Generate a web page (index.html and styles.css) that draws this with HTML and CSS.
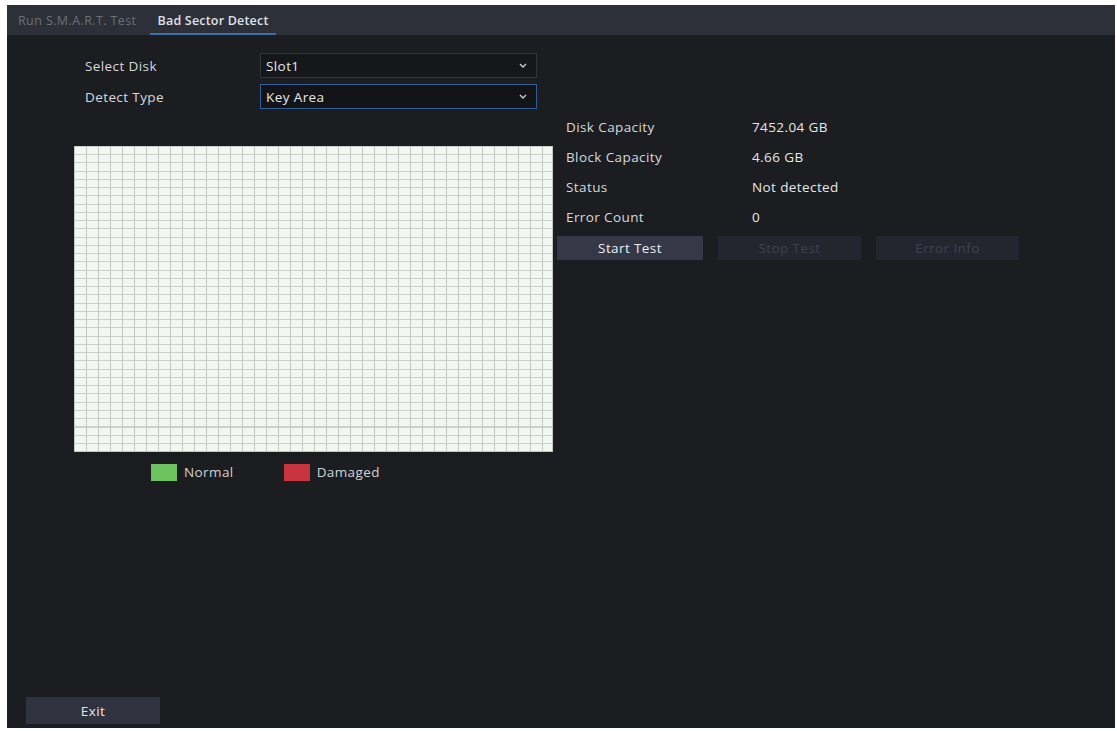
FILE: index.html
```html
<!DOCTYPE html>
<html>
<head>
<meta charset="utf-8">
<link rel="stylesheet" href="styles.css">
</head>
<body>
<div class="window">
  <div class="tabs">
    <div class="tab">Run S.M.A.R.T. Test</div>
    <div class="tab active">Bad Sector Detect</div>
  </div>
  <div class="content">
    <div class="form">
      <div class="form-row">
        <span class="label">Select Disk</span>
        <div class="select">
          <span>Slot1</span>
          <svg class="chev" width="8" height="5" viewBox="0 0 8 5"><path d="M1 1 L4 4 L7 1" fill="none" stroke="#c8ccd2" stroke-width="1.4"/></svg>
        </div>
      </div>
      <div class="form-row">
        <span class="label">Detect Type</span>
        <div class="select focus">
          <span>Key Area</span>
          <svg class="chev" width="8" height="5" viewBox="0 0 8 5"><path d="M1 1 L4 4 L7 1" fill="none" stroke="#c8ccd2" stroke-width="1.4"/></svg>
        </div>
      </div>
    </div>
    <div class="main">
      <div class="left">
        <div class="grid"></div>
        <div class="legend">
          <span class="swatch normal"></span><span class="legend-text">Normal</span>
          <span class="swatch damaged"></span><span class="legend-text">Damaged</span>
        </div>
      </div>
      <div class="right">
        <div class="info-row"><span class="ilabel">Disk Capacity</span><span class="ivalue">7452.04 GB</span></div>
        <div class="info-row"><span class="ilabel">Block Capacity</span><span class="ivalue">4.66 GB</span></div>
        <div class="info-row"><span class="ilabel">Status</span><span class="ivalue">Not detected</span></div>
        <div class="info-row"><span class="ilabel">Error Count</span><span class="ivalue">0</span></div>
        <div class="buttons">
          <button class="btn">Start Test</button>
          <button class="btn disabled">Stop Test</button>
          <button class="btn disabled">Error Info</button>
        </div>
      </div>
    </div>
  </div>
  <div class="footer">
    <button class="btn exit">Exit</button>
  </div>
</div>
</body>
</html>
```

FILE: styles.css
```css
html, body {
  margin: 0;
  padding: 0;
  background: #ffffff;
}
body {
  font-family: "Open Sans", "Liberation Sans", sans-serif;
  font-size: 13.5px;
  letter-spacing: 0.4px;
  color: #d6d9de;
}
.window {
  margin: 5px 2px 0 7px;
  height: 723px;
  background: #1b1d21;
  display: flex;
  flex-direction: column;
}
.tabs {
  height: 30px;
  background: #2d2f39;
  display: flex;
  align-items: stretch;
  padding-left: 4px;
  box-sizing: border-box;
}
.tab {
  padding: 0 7px;
  display: flex;
  align-items: center;
  color: #6c6f78;
  font-size: 12.5px;
  letter-spacing: 0.4px;
  margin-right: 7px;
}
.tab.active {
  color: #dfe2e6;
  font-weight: 600;
  letter-spacing: 0.2px;
  border-bottom: 2px solid #3f6ea8;
  padding-top: 2px;
}
.content {
  flex: 1;
  padding-top: 18px;
}
.form {
  display: flex;
  flex-direction: column;
  gap: 6px;
}
.form-row {
  display: flex;
  align-items: center;
  height: 25px;
  padding-left: 78px;
}
.label {
  width: 175px;
}
.select {
  width: 277px;
  height: 25px;
  box-sizing: border-box;
  border: 1px solid #33363e;
  background: #15171a;
  display: flex;
  align-items: center;
  justify-content: space-between;
  padding: 0 9px 0 5px;
  color: #e6e8ea;
}
.select.focus {
  border: 1px solid #2f5d95;
  background: #121418;
}
.main {
  display: flex;
  margin-top: 3px;
}
.left {
  margin-left: 67px;
  padding-top: 34px;
  width: 479px;
}
.grid {
  width: 479px;
  height: 306px;
  background-color: #f3f7f2;
  background-image:
    repeating-linear-gradient(to right, #c4c8c4 0, #c4c8c4 1px, transparent 1px, transparent 12px),
    repeating-linear-gradient(to bottom, #cdd1cd 0, #cdd1cd 1px, transparent 1px, transparent 8.25px);
  border-right: 1px solid #c4c8c4;
  border-bottom: 1px solid #c4c8c4;
  box-sizing: border-box;
}
.legend {
  display: flex;
  align-items: center;
  padding-left: 77px;
  margin-top: 11px;
}
.swatch {
  width: 26px;
  height: 17px;
  display: inline-block;
}
.swatch.normal { background: #6cc35f; }
.swatch.damaged { background: #c8353f; }
.legend-text {
  margin-left: 7px;
  margin-right: 50px;
  color: #d0d3d8;
}
.right {
  margin-left: 4px;
  padding-top: 0;
}
.info-row {
  height: 30px;
  display: flex;
  align-items: center;
  padding-left: 9px;
}
.ilabel {
  width: 186px;
}
.ivalue {
  color: #e6e8ea;
}
.buttons {
  display: flex;
  gap: 15px;
  margin-top: 4px;
}
.btn {
  font-family: "Open Sans", "Liberation Sans", sans-serif;
  font-size: 13.5px;
  letter-spacing: 0.4px;
  height: 24px;
  width: 146px;
  border: none;
  background: #363848;
  color: #eceef0;
  padding: 0;
}
.btn.disabled {
  background: #24262f;
  color: #3e414c;
  width: 143px;
}
.footer {
  padding: 0 0 4px 19px;
}
.btn.exit {
  width: 134px;
  height: 27px;
  background: #30323f;
  color: #e2e4e8;
}
```
